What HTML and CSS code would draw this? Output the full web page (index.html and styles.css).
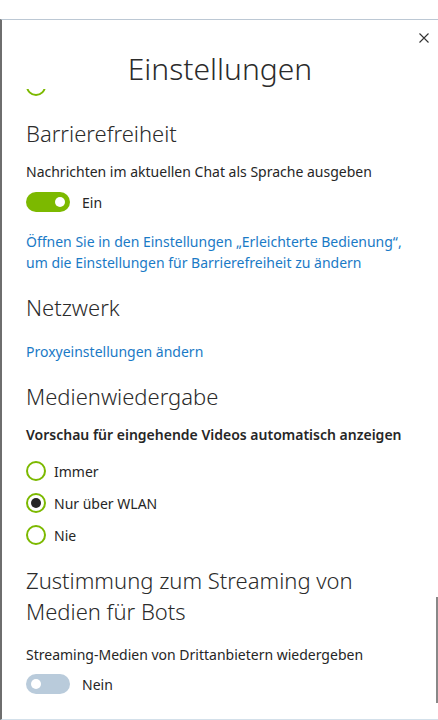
FILE: index.html
```html
<!DOCTYPE html>
<html lang="de">
<head>
  <meta charset="UTF-8">
  <meta name="viewport" content="width=device-width, initial-scale=1.0">
  <title>Einstellungen</title>
  <link rel="stylesheet" href="styles.css">
</head>
<body>

  <div class="panel">
    <div class="panel-head">
      <h1>Einstellungen</h1>
      <button class="close" aria-label="Schließen">
        <svg width="10" height="10" viewBox="0 0 10 10"><path d="M0.5 0.5 L9.5 9.5 M9.5 0.5 L0.5 9.5" stroke="#333" stroke-width="1.1" fill="none"/></svg>
      </button>
    </div>

    <div class="panel-body">
      <!-- last option of the section above, scrolled mostly out of view -->
      <div class="radio cut"><span class="dot"></span></div>

      <section class="first">
        <h2>Barrierefreiheit</h2>
        <p class="label">Nachrichten im aktuellen Chat als Sprache ausgeben</p>
        <div class="toggle-row">
          <span class="toggle on"><span class="knob"></span></span>
          <span>Ein</span>
        </div>
        <a class="link" href="#">Öffnen Sie in den Einstellungen „Erleichterte Bedienung“, um die Einstellungen für Barrierefreiheit zu ändern</a>
      </section>

      <section>
        <h2>Netzwerk</h2>
        <a class="link" href="#">Proxyeinstellungen ändern</a>
      </section>

      <section>
        <h2>Medienwiedergabe</h2>
        <p class="label strong">Vorschau für eingehende Videos automatisch anzeigen</p>
        <div class="radio"><span class="dot"></span>Immer</div>
        <div class="radio checked"><span class="dot"></span>Nur über WLAN</div>
        <div class="radio"><span class="dot"></span>Nie</div>
      </section>

      <section class="bots">
        <h2>Zustimmung zum Streaming von Medien für Bots</h2>
        <p class="label">Streaming-Medien von Drittanbietern wiedergeben</p>
        <div class="toggle-row">
          <span class="toggle"><span class="knob"></span></span>
          <span>Nein</span>
        </div>
      </section>

      <div class="scrollbar"></div>
    </div>
  </div>

</body>
</html>
```

FILE: styles.css
```css
body { margin: 0; padding-top: 19px; font-family: "Noto Sans", "Open Sans", sans-serif; font-size: 14px; color: #262626; background: #fff; }
.panel { height: 699px; border-top: 1px solid #bcc8d4; border-left: 2px solid #6e6e6e; border-bottom: 1px solid #d3e0ea; display: flex; flex-direction: column; }
.panel-head { position: relative; height: 69px; flex: none; }
.panel-head h1 { margin: 0; padding-top: 30px; text-align: center; font-size: 30px; font-weight: 300; line-height: 38px; color: #2b2b2b; }
.close { position: absolute; top: 11px; right: 9px; border: 0; background: none; padding: 0; width: 10px; height: 10px; cursor: pointer; }
.panel-body { position: relative; flex: 1; overflow: hidden; padding: 0 24px; }
section { margin-top: 19px; }
section.first { margin-top: 16px; }
h2 { margin: 0 0 13px; font-size: 22px; font-weight: 300; line-height: 31px; color: #2b2b2b; }
.label { margin: 0 0 9px; line-height: 20px; }
.label.strong { font-weight: 600; margin-bottom: 10px; }
.toggle-row { display: flex; align-items: center; gap: 12px; height: 22px; }
.toggle { position: relative; width: 44px; height: 20px; border-radius: 10px; background: #b9cbdb; }
.toggle .knob { position: absolute; top: 5px; left: 5px; width: 10px; height: 10px; border-radius: 50%; background: #fff; }
.toggle.on { background: #7cb900; }
.toggle.on .knob { left: 29px; }
.link { display: block; margin-top: 18px; color: #1a7ac6; text-decoration: none; line-height: 21px; }
.radio { display: flex; align-items: center; gap: 8px; height: 32px; }
.radio .dot { position: relative; box-sizing: border-box; width: 20px; height: 20px; border: 2px solid #7cb900; border-radius: 50%; }
.radio.checked .dot::after { content: ""; position: absolute; top: 3px; left: 3px; width: 10px; height: 10px; border-radius: 50%; background: #262626; }
.radio.cut { margin-top: -19px; }
section.bots { margin-top: 14px; }
section.bots h2 { margin-bottom: 18px; }
section.bots .label { margin-bottom: 8px; }
.scrollbar { position: absolute; right: 0; top: 508px; width: 2px; height: 106px; background: #888; }
```
